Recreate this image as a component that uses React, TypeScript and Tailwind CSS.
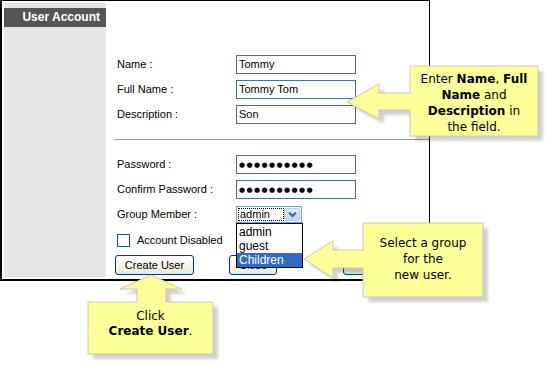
import React from "react";

const callouts = [
    "410,66 538,66 538,136 410,136 410,110 379,110 379,119 347,102 379,84 379,93 410,93",
    "363,223 483,223 483,297 363,297 363,268 333,268 333,278 304,259 333,241 333,250 363,250",
    "88,302 137,302 137,289 120,289 151,275 182,289 166,289 166,302 213,302 213,354 88,354",
];

const FormRow = ({ label, children, className = "" }: { label: string; children: React.ReactNode; className?: string }) => (
    <div className={`flex items-center pl-[3px] ${className}`}>
        <span className="w-[119px]">{label}</span>
        {children}
    </div>
);

const TextBox = ({ value, password }: { value: string; password?: boolean }) => (
    <div className="w-[120px] h-[19px] border border-[#4b6f98] bg-white flex items-center pl-[2px]">
        {password ? (
            <span className="font-['DejaVu_Sans',sans-serif] text-[7px] tracking-[1.4px] leading-none pt-[1px]">
                ●●●●●●●●●●
            </span>
        ) : (
            <span>{value}</span>
        )}
    </div>
);

const XpButton = ({ label, className = "" }: { label: string; className?: string }) => (
    <button className={`h-[20px] border border-[#003c74] rounded-[3px] bg-gradient-to-b from-white to-[#ece9d8] text-[11px] leading-none flex items-center justify-center ${className}`}>
        {label}
    </button>
);

export default function App() {
    return (
        <div className="relative w-[560px] h-[378px] bg-white overflow-hidden font-['Liberation_Sans',Arial,sans-serif] text-[11px] text-black">
            <div className="w-[430px] h-[281px] border-l-2 border-t border-r border-b-2 border-black p-[2px] pr-0 flex">
                <aside className="w-[102px] bg-[#e6e6e6] pt-[5px]">
                    <div className="h-[19px] bg-[#555555] text-white font-bold text-[12px] leading-[19px] text-right pr-[6px]">
                        User Account
                    </div>
                </aside>
                <section className="flex-1 pt-[52px] pl-[8px]">
                    <FormRow label="Name :">
                        <TextBox value="Tommy" />
                    </FormRow>
                    <FormRow label="Full Name :" className="mt-[6px]">
                        <TextBox value="Tommy Tom" />
                    </FormRow>
                    <FormRow label="Description :" className="mt-[6px]">
                        <TextBox value="Son" />
                    </FormRow>

                    <div className="mt-[15px] h-px bg-[#9b9bd9]" />

                    <FormRow label="Password :" className="mt-[15px]">
                        <TextBox value="" password />
                    </FormRow>
                    <FormRow label="Confirm Password :" className="mt-[6px]">
                        <TextBox value="" password />
                    </FormRow>
                    <FormRow label="Group Member :" className="mt-[7px]">
                        <div className="relative w-[66px] h-[17px] border border-[#7f9db9] bg-white flex items-center p-px">
                            <div className="flex-1 h-full border border-dotted border-black flex items-center pl-px">
                                admin
                            </div>
                            <div className="w-[16px] h-full rounded-[2px] border border-[#b7c9ef] bg-gradient-to-b from-[#e6eefc] to-[#c2d3f6] flex items-center justify-center">
                                <svg width="9" height="7" viewBox="0 0 9 7">
                                    <path d="M1 1.5 L4.5 5 L8 1.5" fill="none" stroke="#4d6185" strokeWidth="2" />
                                </svg>
                            </div>
                            <ul className="absolute left-[-1px] top-[16px] w-[67px] h-[45px] border border-black bg-white z-10 text-[12px] leading-[14px] py-px">
                                <li className="pl-[2px] h-[14px]">admin</li>
                                <li className="pl-[2px] h-[14px]">guest</li>
                                <li className="pl-[2px] h-[14px] bg-[#316ac5] text-white">Children</li>
                            </ul>
                        </div>
                    </FormRow>
                    <div className="mt-[10px] pl-[3px] flex items-center h-[14px]">
                        <div className="w-[13px] h-[13px] border border-[#1c5180] bg-white" />
                        <span className="ml-[7px]">Account Disabled</span>
                    </div>
                    <div className="mt-[8px] pl-px flex">
                        <XpButton label="Create User" className="w-[79px]" />
                        <XpButton label="Close" className="w-[48px] ml-[35px]" />
                        <XpButton label="Cancel" className="w-[76px] ml-[66px]" />
                    </div>
                </section>
            </div>

            <svg className="absolute inset-0 z-20 pointer-events-none" width="560" height="378">
                <defs>
                    <filter id="soft" x="-10%" y="-10%" width="130%" height="130%">
                        <feGaussianBlur stdDeviation="1.5" />
                    </filter>
                </defs>
                {callouts.map((points) => (
                    <g key={points}>
                        <polygon points={points} fill="#000" opacity="0.18" transform="translate(5 5)" filter="url(#soft)" />
                        <polygon points={points} fill="#ffff99" stroke="#c8c8b4" strokeWidth="1" />
                    </g>
                ))}
            </svg>

            <div className="absolute z-30 left-[410px] top-[71px] w-[128px] text-center font-['DejaVu_Sans',Verdana,sans-serif] text-[12px] leading-[16px]">
                Enter <b>Name</b>, <b>Full</b>
                <br />
                <b>Name</b> and
                <br />
                <b>Description</b> in
                <br />
                the field.
            </div>
            <div className="absolute z-30 left-[363px] top-[235px] w-[120px] text-center font-['DejaVu_Sans',Verdana,sans-serif] text-[12px] leading-[16px]">
                Select a group
                <br />
                for the
                <br />
                new user.
            </div>
            <div className="absolute z-30 left-[88px] top-[309px] w-[125px] text-center font-['DejaVu_Sans',Verdana,sans-serif] text-[12px] leading-[15px]">
                Click
                <br />
                <b>Create User</b>.
            </div>
        </div>
    );
}
